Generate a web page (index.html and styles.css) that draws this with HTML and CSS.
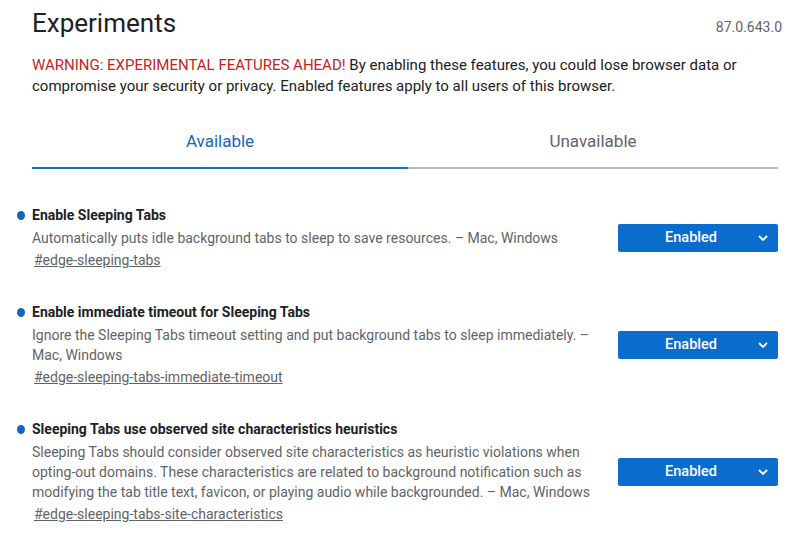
FILE: index.html
```html
<!DOCTYPE html>
<html>
<head>
<meta charset="utf-8">
<link rel="stylesheet" href="styles.css">
</head>
<body>
<div class="page">
  <header class="header">
    <h1 class="title">Experiments</h1>
    <span class="version">87.0.643.0</span>
  </header>
  <p class="warning"><span class="warn-red">WARNING: EXPERIMENTAL FEATURES AHEAD!</span> By enabling these features, you could lose browser data or compromise your security or privacy. Enabled features apply to all users of this browser.</p>
  <nav class="tabs">
    <div class="tab tab-active">Available</div>
    <div class="tab">Unavailable</div>
  </nav>
  <section class="list">
    <div class="exp">
      <div class="exp-text">
        <h3 class="exp-title"><span class="dot"></span>Enable Sleeping Tabs</h3>
        <p class="exp-desc">Automatically puts idle background tabs to sleep to save resources. – Mac, Windows</p>
        <a class="exp-link">#edge-sleeping-tabs</a>
      </div>
      <div class="select"><span class="select-label">Enabled</span><svg class="chev" width="10" height="6" viewBox="0 0 10 6"><path d="M1 1l4 4 4-4" fill="none" stroke="#fff" stroke-width="1.8"/></svg></div>
    </div>
    <div class="exp">
      <div class="exp-text">
        <h3 class="exp-title"><span class="dot"></span>Enable immediate timeout for Sleeping Tabs</h3>
        <p class="exp-desc">Ignore the Sleeping Tabs timeout setting and put background tabs to sleep immediately. – Mac, Windows</p>
        <a class="exp-link">#edge-sleeping-tabs-immediate-timeout</a>
      </div>
      <div class="select"><span class="select-label">Enabled</span><svg class="chev" width="10" height="6" viewBox="0 0 10 6"><path d="M1 1l4 4 4-4" fill="none" stroke="#fff" stroke-width="1.8"/></svg></div>
    </div>
    <div class="exp">
      <div class="exp-text">
        <h3 class="exp-title"><span class="dot"></span>Sleeping Tabs use observed site characteristics heuristics</h3>
        <p class="exp-desc">Sleeping Tabs should consider observed site characteristics as heuristic violations when opting-out domains. These characteristics are related to background notification such as modifying the tab title text, favicon, or playing audio while backgrounded. – Mac, Windows</p>
        <a class="exp-link">#edge-sleeping-tabs-site-characteristics</a>
      </div>
      <div class="select"><span class="select-label">Enabled</span><svg class="chev" width="10" height="6" viewBox="0 0 10 6"><path d="M1 1l4 4 4-4" fill="none" stroke="#fff" stroke-width="1.8"/></svg></div>
    </div>
  </section>
</div>
</body>
</html>
```

FILE: styles.css
```css
* { box-sizing: border-box; }
html, body { margin: 0; padding: 0; background: #fff; }
body { font-family: Roboto, "Liberation Sans", sans-serif; color: #202124; }
.page { padding: 7px 22px 0 32px; }
.header { display: flex; justify-content: space-between; align-items: baseline; }
.title { margin: 0; font-size: 26px; font-weight: 400; line-height: 32px; color: #202124; }
.version { font-size: 14px; color: #5f6368; margin-right: -4px; }
.warning { margin: 16px 0 0; font-size: 15px; line-height: 21px; color: #202124; max-width: 745px; }
.warn-red { color: #c5221f; }
.tabs { display: flex; margin-top: 27px; }
.tab { flex: 1 1 370px; text-align: center; font-size: 17px; color: #5f6368; height: 45px; line-height: 34px; border-bottom: 2px solid #b8b8b8; }
.tab-active { flex-basis: 376px; color: #1565c0; border-bottom-color: #1a6fc4; }
.list { padding-top: 36px; }
.exp { display: flex; align-items: center; justify-content: space-between; margin-bottom: 32px; }
.exp-text { width: 562px; }
.exp-title { display: flex; align-items: center; margin: 0 0 0 -15px; font-size: 14px; font-weight: 700; line-height: 20px; color: #202124; }
.dot { width: 8px; height: 9px; border-radius: 50%; background: #1266c4; margin-right: 7px; }
.exp-desc { margin: 3px 0 0; font-size: 14px; line-height: 20px; color: #5f6368; }
.exp-link { display: inline-block; margin: 2px 0 0 2px; font-size: 14px; line-height: 20px; color: #5f6368; text-decoration: underline; }
.select { width: 160px; height: 28px; background: #0a6ccc; border-radius: 2px; display: flex; align-items: center; justify-content: center; position: relative; }
.select-label { color: #fff; font-size: 14.5px; font-weight: 500; margin-right: 14px; }
.chev { position: absolute; right: 10px; top: 11px; }
```
